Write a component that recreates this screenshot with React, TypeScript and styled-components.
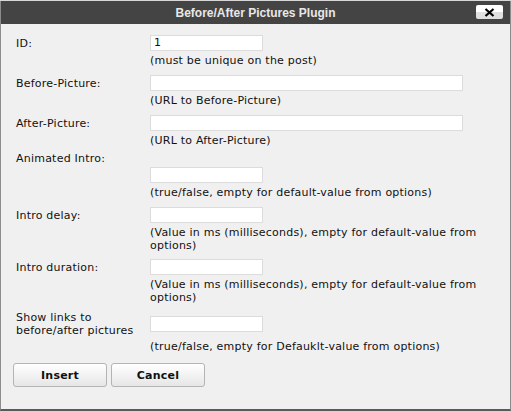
import React from "react";
import styled, { createGlobalStyle } from "styled-components";

const Global = createGlobalStyle`
  html, body { margin: 0; padding: 0; background: #d8d8d8; }
  body { width: 511px; height: 411px; overflow: hidden; }
`;

const Dialog = styled.div`
  margin-top: 1px;
  width: 511px;
  height: 410px;
  box-sizing: border-box;
  background: #f0f0f0;
  border-left: 1px solid #8c8c8c;
  border-right: 1px solid #8c8c8c;
  border-bottom: 2px solid #5a5a5a;
  display: flex;
  flex-direction: column;
  font-family: "DejaVu Sans", Verdana, sans-serif;
  font-size: 11px;
  letter-spacing: 0.22px;
  color: #111;
`;

const TitleBar = styled.div`
  height: 23px;
  background: #444444;
  display: flex;
  align-items: center;
  justify-content: center;
  position: relative;
  letter-spacing: 0;
`;

const Title = styled.span`
  font-family: "Liberation Sans", Arial, sans-serif;
  font-weight: bold;
  font-size: 12px;
  color: #e8e8e8;
`;

const CloseButton = styled.div`
  position: absolute;
  right: 7px;
  top: 4px;
  width: 27px;
  height: 14px;
  border-radius: 2px;
  background: linear-gradient(#ffffff 0, #ffffff 50%, #e0e0e0 50%, #e0e0e0 100%);
  display: flex;
  align-items: center;
  justify-content: center;
`;

const Form = styled.div`
  padding: 11px 0 0 15px;
  display: flex;
  flex-direction: column;
`;

const Row = styled.div`
  display: grid;
  grid-template-columns: 134px auto;
  align-items: center;
  min-height: 16px;
`;

const Label = styled.div`
  line-height: 13px;
`;

const Input = styled.div<{ $w: number }>`
  width: ${(p) => p.$w}px;
  height: 16px;
  box-sizing: border-box;
  background: #fff;
  border: 1px solid #dcdcdc;
  padding: 0 3px;
  line-height: 14px;
`;

const Hint = styled.div<{ $mb?: number }>`
  margin: 3px 0 ${(p) => p.$mb ?? 8}px 134px;
  line-height: 13px;
  max-width: 330px;
`;

const LoneLabel = styled.div`
  line-height: 13px;
  margin: -3px 0 2px 0;
`;

const Buttons = styled.div`
  display: flex;
  gap: 4px;
  padding-left: 12px;
  margin-top: 2px;
`;

const Button = styled.div`
  width: 94px;
  height: 24px;
  box-sizing: border-box;
  border: 1px solid #b4b4b4;
  border-radius: 3px;
  background: linear-gradient(#ffffff, #e6e6e6);
  display: flex;
  align-items: center;
  justify-content: center;
  font-weight: bold;
  font-size: 11px;
  color: #111;
`;

export default function App() {
  return (
    <>
      <Global />
      <Dialog>
        <TitleBar>
          <Title>Before/After Pictures Plugin</Title>
          <CloseButton>
            <svg width="11" height="9" viewBox="0 0 11 9">
              <path d="M1.5 1 L9.5 8 M9.5 1 L1.5 8" stroke="#000" strokeWidth="2.2" />
            </svg>
          </CloseButton>
        </TitleBar>
        <Form>
          <Row>
            <Label>ID:</Label>
            <Input $w={113}>1</Input>
          </Row>
          <Hint>(must be unique on the post)</Hint>
          <Row>
            <Label>Before-Picture:</Label>
            <Input $w={313} />
          </Row>
          <Hint>(URL to Before-Picture)</Hint>
          <Row>
            <Label>After-Picture:</Label>
            <Input $w={313} />
          </Row>
          <Hint>(URL to After-Picture)</Hint>
          <LoneLabel>Animated Intro:</LoneLabel>
          <Row>
            <span />
            <Input $w={113} />
          </Row>
          <Hint>(true/false, empty for default-value from options)</Hint>
          <Row>
            <Label>Intro delay:</Label>
            <Input $w={113} />
          </Row>
          <Hint $mb={7}>(Value in ms (milliseconds), empty for default-value from options)</Hint>
          <Row>
            <Label>Intro duration:</Label>
            <Input $w={113} />
          </Row>
          <Hint $mb={7}>(Value in ms (milliseconds), empty for default-value from options)</Hint>
          <Row>
            <Label>
              Show links to
              <br />
              before/after pictures
            </Label>
            <Input $w={113} />
          </Row>
          <Hint>(true/false, empty for Defauklt-value from options)</Hint>
        </Form>
        <Buttons>
          <Button>Insert</Button>
          <Button>Cancel</Button>
        </Buttons>
      </Dialog>
    </>
  );
}
